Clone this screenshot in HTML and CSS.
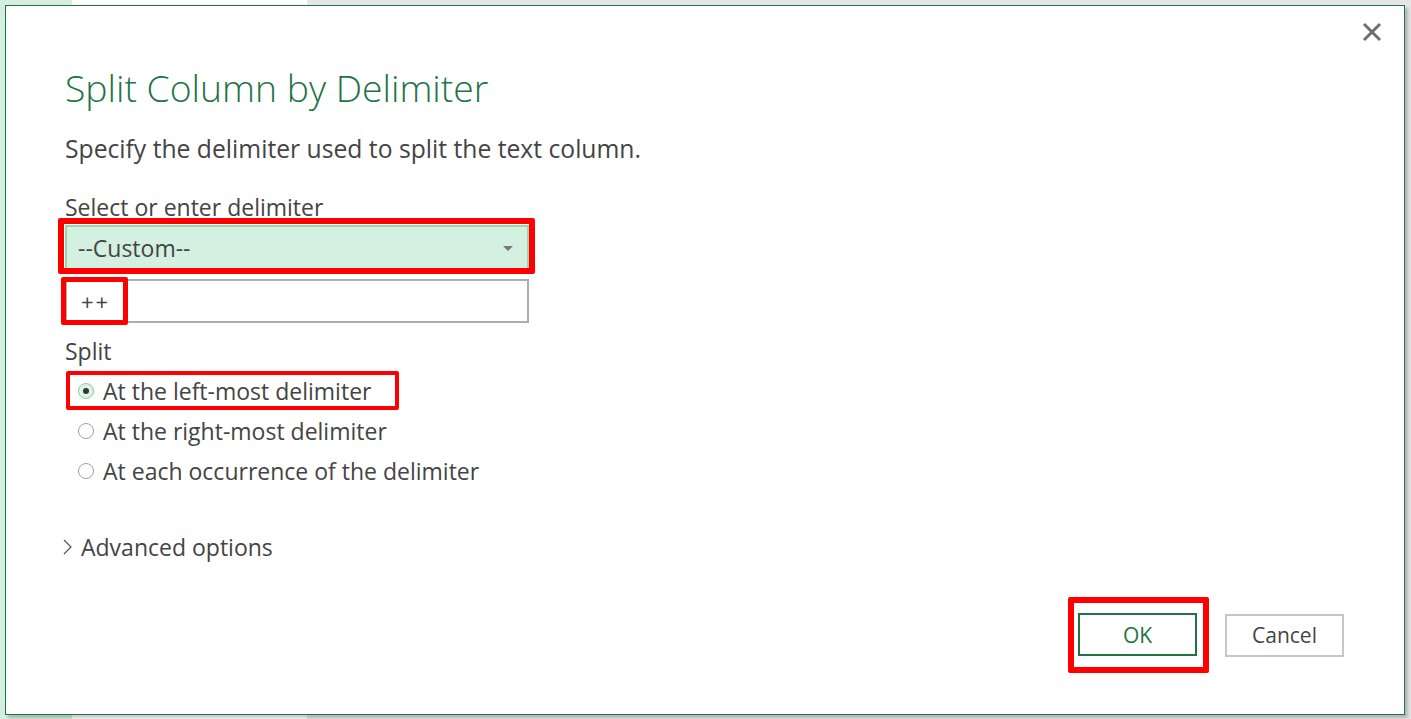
FILE: index.html
```html
<!DOCTYPE html>
<html lang="en">

<head>
    <meta charset="UTF-8">
    <title>Split Column by Delimiter</title>
    <link rel="stylesheet" href="styles.css">
</head>

<body>

    <div class="dialog">
        <div class="top-bar">
            <button class="close" title="Close">
                <svg width="20" height="20" viewBox="0 0 20 20">
                    <path d="M2 2 L18 18 M18 2 L2 18" stroke="#6e6e6e" stroke-width="3" fill="none" />
                </svg>
            </button>
        </div>

        <h1 class="title">Split Column by Delimiter</h1>
        <p class="intro">Specify the delimiter used to split the text column.</p>

        <div class="field-label">Select or enter delimiter</div>
        <div class="select marked">
            <span>--Custom--</span>
            <span class="caret"></span>
        </div>
        <div class="custom-input">
            <span class="value">++</span>
        </div>

        <div class="group-label">Split</div>
        <div class="radios">
            <div class="radio-row"><label class="radio marked"><span class="dot checked"></span>At the left-most delimiter</label></div>
            <div class="radio-row"><label class="radio"><span class="dot"></span>At the right-most delimiter</label></div>
            <div class="radio-row"><label class="radio"><span class="dot"></span>At each occurrence of the delimiter</label></div>
        </div>

        <div class="advanced">
            <svg width="12" height="18" viewBox="0 0 12 18">
                <polyline points="2,2 9,9 2,16" stroke="#555" stroke-width="1.2" fill="none" />
            </svg>
            <span>Advanced options</span>
        </div>

        <div class="actions">
            <span class="ok-mark"><button class="btn ok">OK</button></span>
            <button class="btn cancel">Cancel</button>
        </div>
    </div>

</body>

</html>
```

FILE: styles.css
```css
body {
    margin: 0;
    padding: 5px 0 0 5px;
    height: 719px;
    box-sizing: border-box;
    overflow: hidden;
    font-family: "Open Sans", "Noto Sans", sans-serif;
    color: #444;
    background:
        linear-gradient(to right, #d4eedf 0, #d4eedf 72px, #fff 72px, #fff 307px, #e6e6e6 307px);
}

.dialog {
    width: 1400px;
    height: 710px;
    box-sizing: border-box;
    border: 1px solid #217346;
    background: #fff;
    box-shadow: 3px 3px 3px rgba(0, 0, 0, 0.22);
    padding: 0 60px 0 59px;
    display: flex;
    flex-direction: column;
}

.top-bar {
    display: flex;
    justify-content: flex-end;
    height: 16px;
    margin-right: -38px;
}

.close {
    border: none;
    background: none;
    padding: 0;
    margin-top: 16px;
    width: 20px;
    height: 20px;
    cursor: pointer;
}

.title {
    margin: 42px 0 0;
    font-size: 37.3px;
    font-weight: 300;
    line-height: 48px;
    color: #217346;
}

.intro {
    margin: 22px 0 0;
    font-size: 24.7px;
    line-height: 30px;
}

.field-label,
.group-label {
    font-size: 23px;
    line-height: 30px;
}

.field-label {
    margin-top: 28px;
}

.select {
    position: relative;
    margin-top: 3px;
    width: 464px;
    height: 46px;
    box-sizing: border-box;
    border: 2px solid #9dd4b4;
    background: #d3f0e0;
    display: flex;
    align-items: center;
    justify-content: space-between;
    padding: 0 14px 0 11px;
    font-size: 23px;
}

.select.marked::after {
    content: "";
    position: absolute;
    left: -9px;
    top: -9px;
    right: -8px;
    bottom: -5px;
    border: 6px solid #f00;
    border-radius: 2px;
}

.caret {
    width: 0;
    height: 0;
    border-left: 5px solid transparent;
    border-right: 5px solid transparent;
    border-top: 5px solid #777;
}

.custom-input {
    position: relative;
    margin-top: 8px;
    width: 464px;
    height: 44px;
    box-sizing: border-box;
    border: 2px solid #adadad;
    display: flex;
    align-items: center;
    padding-left: 14px;
    font-size: 22px;
}

.custom-input::after {
    content: "";
    position: absolute;
    left: -6px;
    top: -4px;
    width: 57px;
    bottom: -4px;
    border: 5px solid #f00;
    border-radius: 2px;
}

.value {
    letter-spacing: 2px;
}

.group-label {
    margin-top: 13px;
}

.radios {
    display: flex;
    flex-direction: column;
    padding-left: 13px;
    margin-top: 5px;
}

.radio-row {
    height: 40px;
    display: flex;
    align-items: center;
}

.radio {
    position: relative;
    display: inline-flex;
    align-items: center;
    height: 40px;
    gap: 9px;
    font-size: 23px;
}

.radio.marked::after {
    content: "";
    position: absolute;
    left: -12px;
    top: 0;
    right: -28px;
    bottom: 1px;
    border: 4px solid #f00;
    border-radius: 2px;
}

.dot {
    width: 16px;
    height: 16px;
    box-sizing: border-box;
    border: 1px solid #a0a0a0;
    border-radius: 50%;
    background: #fff;
    display: flex;
    align-items: center;
    justify-content: center;
}

.dot.checked {
    border-color: #8bcaa5;
    background: #dff2e7;
}

.dot.checked::before {
    content: "";
    width: 6px;
    height: 6px;
    border-radius: 50%;
    background: #333;
}

.advanced {
    margin-top: 41px;
    display: flex;
    align-items: center;
    gap: 7px;
    font-size: 23px;
    line-height: 30px;
    margin-left: -3px;
}

.actions {
    margin-top: auto;
    margin-bottom: 41px;
    display: flex;
    justify-content: flex-end;
    align-items: center;
    gap: 16px;
}

.ok-mark {
    border: 6px solid #f00;
    border-radius: 2px;
    padding: 10px 6px 11px 4px;
    display: flex;
}

.btn {
    width: 119px;
    height: 43px;
    box-sizing: border-box;
    background: #fff;
    font-family: inherit;
    font-size: 21px;
    color: #444;
    cursor: pointer;
}

.ok {
    border: 2px solid #217346;
    color: #217346;
}

.cancel {
    border: 2px solid #c6c6c6;
}
```
